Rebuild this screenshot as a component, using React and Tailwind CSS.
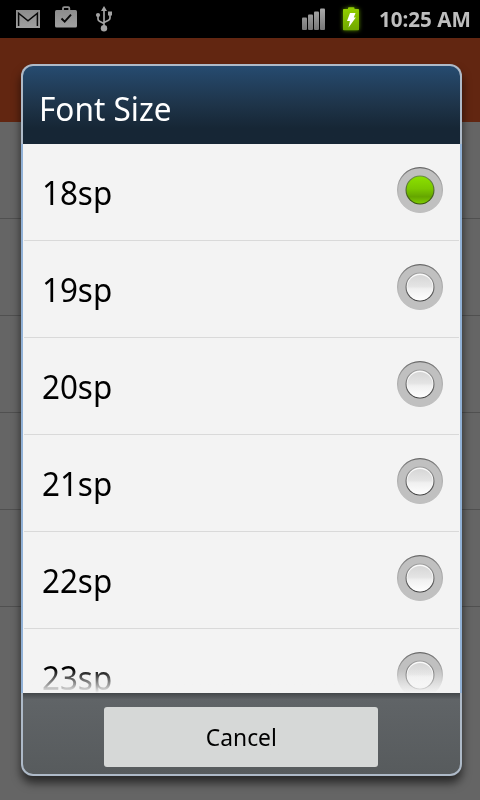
const sizes = ['18sp', '19sp', '20sp', '21sp', '22sp', '23sp'];

function StatusBar() {
  return (
    <header className="flex h-[38px] shrink-0 items-center justify-between bg-black pl-4 pr-[9px]">
      <div className="flex h-full items-center">
        {/* Mail */}
        <svg width="24" height="18" viewBox="0 0 24 18">
          <defs>
            <linearGradient id="glyph" x1="0" x2="0" y1="0" y2="1">
              <stop offset="0" stopColor="#8c8c8c" />
              <stop offset="1" stopColor="#a0a0a0" />
            </linearGradient>
          </defs>
          <rect width="24" height="18" fill="url(#glyph)" />
          <path d="M2.600 16V3.200l9.400 7.600 9.400-7.600V16" fill="none" stroke="#080808" strokeWidth="1.500" />
        </svg>
        {/* Briefcase */}
        <svg width="22" height="22" viewBox="0 0 22 22" className="-mt-[4px] ml-[15px]">
          <path d="M8 5V2.200Q8 1.200 9.200 1.200h4Q14.300 1.200 14.300 2.200V5" fill="none" stroke="#909090" strokeWidth="1.800" />
          <rect y="4" width="22" height="17.500" rx="1.500" fill="url(#glyph)" />
          <path d="M6.500 12.500l3.200 3.200 6.300-7" fill="none" stroke="#080808" strokeWidth="1.900" />
        </svg>
        {/* USB */}
        <svg width="18" height="26" viewBox="0 0 18 26" className="-mt-px ml-[18px]">
          <g fill="none" stroke="#a3a3a3" strokeWidth="1.700">
            <path d="M9 4v18M3 9v4q0 1.500 1.500 2.200L9 17.500M15 8v4q0 1.500-1.500 2.200L9 16.500" />
          </g>
          <path d="M9 0l3 5H6z" fill="#a3a3a3" />
          <circle cx="3" cy="9" r="2.100" fill="#a3a3a3" />
          <rect x="13" y="5.500" width="4" height="4" fill="#a3a3a3" />
          <circle cx="9" cy="22.300" r="3.200" fill="#a3a3a3" />
        </svg>
      </div>
      <div className="flex h-full items-center">
        {/* Signal */}
        <svg width="24" height="22" viewBox="0 0 24 22" className="mr-[16px]">
          <defs>
            <linearGradient id="bars" x1="0" x2="0" y1="0" y2="22" gradientUnits="userSpaceOnUse">
              <stop offset="0" stopColor="#aaa" />
              <stop offset="1" stopColor="#777" />
            </linearGradient>
          </defs>
          <g fill="url(#bars)">
            <rect x="0" y="9.500" width="5" height="12.500" rx="1" />
            <rect x="6" y="6.500" width="5" height="15.500" rx="1" />
            <rect x="12" y="3.500" width="5" height="18.500" rx="1" />
            <rect x="18" y="0.500" width="5" height="21.500" rx="1" />
          </g>
        </svg>
        {/* Battery */}
        <svg width="18" height="24" viewBox="0 0 18 24" className="-mt-px mr-[19px] drop-shadow-[0_0_2px_#5b8c00]">
          <defs>
            <linearGradient id="battery" x1="0" x2="0" y1="0" y2="1">
              <stop offset="0" stopColor="#93d000" />
              <stop offset="1" stopColor="#70a700" />
            </linearGradient>
          </defs>
          <path d="M1.800 2H6V1.200Q6 .300 7 .300h4.500q1 0 1 .900V2h3.700Q17 2 17 2.800v19.700q0 .8-.8.800H1.800q-.8 0-.8-.800V2.800Q1 2 1.800 2z" fill="url(#battery)" />
          <path d="M8 6h5.500l-1.700 4.500h2L6.500 20.500l1.400-6.500H5z" fill="#fff" />
        </svg>
        <span className="w-[92px] whitespace-nowrap text-[21px] font-bold leading-[38px] text-[#bebebe]">
          <span className="inline-block origin-left scale-x-[0.98]">10:25 AM</span>
        </span>
      </div>
    </header>
  );
}

function Radio({ checked }) {
  return (
    <svg width="48" height="48" viewBox="0 0 48 48">
      <defs>
        <linearGradient id="green" x1="0" x2="0" y1="0" y2="1">
          <stop offset="0" stopColor="#8be000" />
          <stop offset="0.450" stopColor="#7bc800" />
          <stop offset="0.750" stopColor="#65a600" />
          <stop offset="1" stopColor="#7dcb00" />
        </linearGradient>
        <linearGradient id="white" x1="0" x2="0" y1="0" y2="1">
          <stop offset="0" stopColor="#d6d6d6" />
          <stop offset="0.450" stopColor="#e4e4e4" />
          <stop offset="0.550" stopColor="#f0f0f0" />
          <stop offset="1" stopColor="#fefefe" />
        </linearGradient>
        <linearGradient id="ring" x1="0" x2="0" y1="0" y2="1">
          <stop offset="0" stopColor="#686868" />
          <stop offset="0.350" stopColor="#a4a4a4" />
          <stop offset="0.700" stopColor="#bebebe" />
        </linearGradient>
        <linearGradient id="rim" x1="0" x2="0" y1="0" y2="1">
          <stop offset="0" stopColor="#a0a0a0" />
          <stop offset="1" stopColor="#3c3c3c" />
        </linearGradient>
        <linearGradient id="greenRim" x1="0" x2="0" y1="0" y2="1">
          <stop offset="0" stopColor="#6d8a50" />
          <stop offset="1" stopColor="#34500c" />
        </linearGradient>
      </defs>
      <circle cx="24" cy="24" r="22.400" fill="#c0c0c0" stroke="url(#ring)" strokeWidth="1.200" />
      <circle cx="24" cy="24" r="14.500" fill={checked ? 'url(#greenRim)' : 'url(#rim)'} />
      <circle cx="24" cy="24" r="13.400" fill={checked ? 'url(#green)' : '#fafafa'} />
      {!checked && <circle cx="24" cy="24.600" r="12.700" fill="url(#white)" />}
    </svg>
  );
}

function FontSizeDialog({ selected }) {
  return (
    <div className="flex h-[712px] w-[441px] flex-col overflow-hidden rounded-[12px] bg-[#aebac8] shadow-[0_7px_10px_rgba(0,0,0,0.6)]">
      <div className="mx-[2px] mt-[2px] h-[78px] shrink-0 rounded-t-[10px] bg-linear-to-b from-[#264b70] via-[#1e3449] to-[#162635] to-80% pl-4">
        <h1 className="origin-left scale-x-[0.955] text-[33px] leading-[86px] text-white">Font Size</h1>
      </div>
      <div className="relative h-[549px] shrink-0 overflow-hidden border-x-2 border-[#91b1d6] bg-[#f3f3f3]">
        {sizes.map((size) => (
          <div key={size} className="mr-px ml-px flex h-[97px] items-center justify-between border-b border-[#d9d9d9] pr-[15px] pl-[18px]">
            <span className="origin-left scale-x-[0.95] pt-[2px] text-[33px] leading-[94px] text-black">{size}</span>
            <div className="-mt-1">
              <Radio checked={size === selected} />
            </div>
          </div>
        ))}
        {/* Fade at the end of the list */}
        <div className="absolute inset-x-0 bottom-0 h-[24px] bg-linear-to-b from-[#f3f3f3]/0 to-[#f3f3f3]" />
      </div>
      <div className="mx-[2px] mb-[2px] flex flex-1 justify-center rounded-b-[10px] bg-linear-to-b from-[#43474a] via-[#606467] via-8% to-[#575b5d] pt-[14px] pr-px">
        <button className="h-[60px] w-[274px] rounded-[3px] bg-[#d6d8d7] text-[24px] leading-[60px] text-black">
          <span className="inline-block scale-x-[0.95]">Cancel</span>
        </button>
      </div>
    </div>
  );
}

export default function App() {
  return (
    <div className="relative flex h-[800px] w-[480px] flex-col overflow-hidden bg-[#656565] font-['Noto_Sans','Open_Sans',sans-serif]">
      <StatusBar />
      <div className="h-[84px] shrink-0 bg-[#622611]" />
      {/* Dimmed settings list behind the dialog */}
      <div className="flex-1">
        {[0, 1, 2, 3, 4].map((row) => (
          <div key={row} className="h-[97px] border-b border-[#505050]" />
        ))}
      </div>
      <div className="absolute top-[64px] left-[21px]">
        <FontSizeDialog selected="18sp" />
      </div>
    </div>
  );
}
